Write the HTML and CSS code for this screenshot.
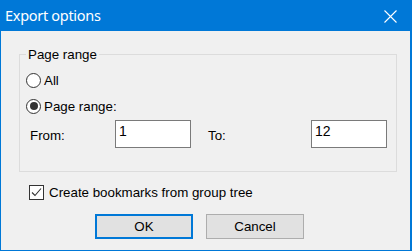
FILE: index.html
```html
<!DOCTYPE html>
<html>
<head>
<meta charset="utf-8">
<link rel="stylesheet" href="styles.css">
</head>
<body>
<div class="window">
  <div class="titlebar">
    <span class="title">Export options</span>
    <svg class="close" width="13" height="13" viewBox="0 0 13 13"><path d="M0.5 0.5 L12.5 12.5 M12.5 0.5 L0.5 12.5" stroke="#fff" stroke-width="1.1" fill="none"/></svg>
  </div>
  <div class="content">
    <fieldset class="group">
      <legend>Page range</legend>
      <label class="radio"><span class="radio-circle"></span><span>All</span></label>
      <label class="radio"><span class="radio-circle checked"></span><span>Page range:</span></label>
      <div class="range-row">
        <span class="lbl">From:</span>
        <div class="input">1</div>
        <span class="lbl">To:</span>
        <div class="input">12</div>
      </div>
    </fieldset>
    <label class="check">
      <span class="check-box"><svg width="11" height="11" viewBox="0 0 11 11"><path d="M1 5.5 L4 8.5 L10 1.5" stroke="#333" stroke-width="1.1" fill="none"/></svg></span>
      <span>Create bookmarks from group tree</span>
    </label>
    <div class="buttons">
      <button class="btn default">OK</button>
      <button class="btn">Cancel</button>
    </div>
  </div>
</div>
</body>
</html>
```
FILE: styles.css
```css
html, body {
  margin: 0;
  padding: 0;
  background: #f0f0f0;
}
.window {
  width: 412px;
  height: 251px;
  box-sizing: border-box;
  border: 1px solid #0078d7;
  border-right-width: 2px;
  border-top: 0;
  background: #f0f0f0;
  font-family: "Liberation Sans", Arial, sans-serif;
  font-size: 13.33px;
  color: #000;
  display: flex;
  flex-direction: column;
}
.titlebar {
  height: 31px;
  flex: none;
  background: #0078d7;
  display: flex;
  align-items: center;
  margin: 0 -2px 0 -1px;
  padding: 0 15px 0 5px;
}
.title {
  flex: 1;
  color: #fff;
  font-family: "Noto Sans", sans-serif;
  font-size: 14.5px;
  letter-spacing: -0.3px;
  line-height: 31px;
  padding-bottom: 1px;
}
.close {
  display: block;
  margin-top: 1px;
}
.content {
  padding: 16px 0 0 18px;
}
.group {
  margin: 0;
  width: 378px;
  box-sizing: border-box;
  border: 1px solid #dcdcdc;
  padding: 5px 0 23px 0;
}
.group legend {
  margin-left: 6px;
  padding: 0 2px;
  line-height: 15px;
}
.radio {
  display: flex;
  align-items: center;
  height: 26px;
  padding-left: 6px;
  gap: 3px;
}
.radio-circle {
  width: 13px;
  height: 13px;
  border: 1px solid #333;
  border-radius: 50%;
  background: #fff;
  display: flex;
  align-items: center;
  justify-content: center;
}
.radio-circle.checked::after {
  content: "";
  width: 8px;
  height: 8px;
  border-radius: 50%;
  background: #333;
}
.range-row {
  display: grid;
  grid-template-columns: 85px 76px 120px 76px;
  align-items: center;
  margin-top: 1px;
  padding-left: 10px;
}
.range-row .lbl:nth-of-type(2) {
  margin-left: 17px;
}
.lbl {
  padding-top: 3px;
}
.input {
  width: 76px;
  height: 28px;
  box-sizing: border-box;
  border: 1px solid #7a7a7a;
  background: #fff;
  padding: 2px 0 0 3px;
  font-size: 14px;
}
.check {
  display: flex;
  align-items: center;
  height: 15px;
  margin-top: 13px;
  padding-left: 10px;
  gap: 5px;
}
.check-box {
  width: 13px;
  height: 13px;
  border: 1px solid #333;
  background: #fff;
  display: flex;
  align-items: center;
  justify-content: center;
}
.check-box svg {
  display: block;
}
.buttons {
  display: flex;
  gap: 13px;
  margin-top: 14px;
  padding-left: 76px;
}
.btn {
  width: 98px;
  height: 25px;
  box-sizing: border-box;
  background: #e1e1e1;
  border: 1px solid #adadad;
  font-family: "Liberation Sans", Arial, sans-serif;
  font-size: 13.33px;
  color: #000;
  padding: 0;
  margin: 0;
}
.btn.default {
  border: 2px solid #0078d7;
}
```
